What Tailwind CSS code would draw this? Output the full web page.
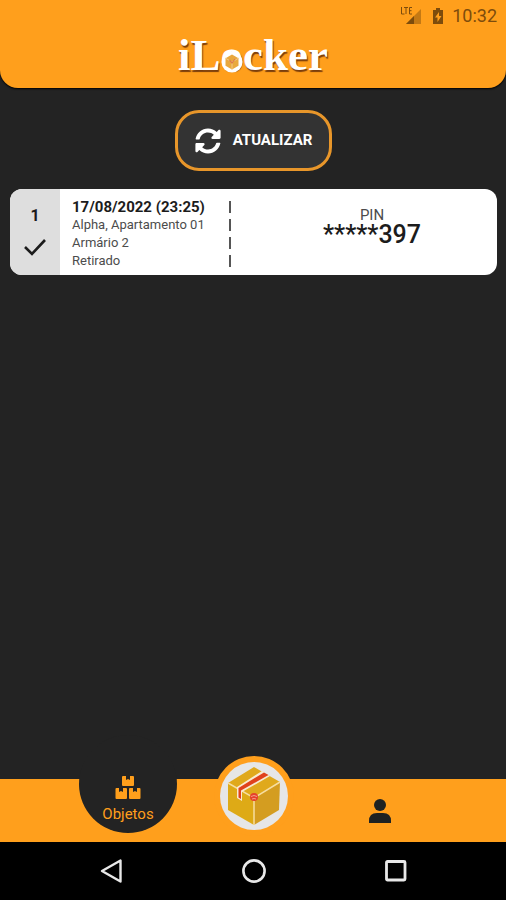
<!DOCTYPE html>
<html lang="pt-BR">
<head>
    <meta charset="UTF-8">
    <meta name="viewport" content="width=device-width, initial-scale=1.0">
    <title>iLocker | Objetos</title>
    <script src="https://cdn.jsdelivr.net/npm/@tailwindcss/browser@4"></script>
</head>
<body class="bg-[#232323] font-['Roboto',sans-serif]">
    <div class="min-h-screen flex flex-col">

        <!-- Header -->
        <header class="h-[88px] bg-[#ff9f1c] rounded-b-[18px] shadow-[0_1px_2px_#000]">
            <div class="h-8 px-[9px] flex items-center justify-end text-[#7d4c0c]">
                <svg class="w-[22px] h-[18px] mr-[10px]" viewBox="0 0 22 18" fill="currentColor">
                    <path d="M21 2v15H6z" opacity=".45"/>
                    <path d="M14 9v8H6z"/>
                    <path d="M1.500 0v7h3M4 .5h4M6 .5V7M12 .5H9.500V7H12M9.500 3.700h2" fill="none" stroke="currentColor" stroke-width="1"/>
                </svg>
                <svg class="w-3 h-[18px] mr-2" viewBox="0 0 12 18">
                    <path d="M4 1h4v2h3v14H1V3h3z" fill="currentColor"/>
                    <path d="M7 5l-4 5.500h2.500V15l4-6H7z" fill="#ff9f1c"/>
                </svg>
                <span class="text-[18px] leading-8">10:32</span>
            </div>
            <h1 class="pt-px text-center text-white font-bold text-[45px] leading-[44px] font-['Liberation_Serif',serif] [text-shadow:1px_2px_1px_#7a3d0c]">iL<span class="relative">o<svg class="absolute left-1/2 bottom-[7px] -translate-x-1/2 size-[22px]" viewBox="0 0 22 22">
                <circle cx="11" cy="11" r="10.500" fill="#fff"/>
                <path d="M11 3.500l6.500 3.700v7.600L11 18.500l-6.500-3.700V7.200z" fill="#e9a83e"/>
                <path d="M4.500 7.200L11 11l6.500-3.800M11 11v7.500" fill="none" stroke="#f3c987" stroke-width="1"/>
                <path d="M8.500 9l2.500 3 3-4" fill="none" stroke="#dd7a4a" stroke-width="1.200"/>
            </svg></span>cker</h1>
        </header>

        <!-- Content -->
        <main class="flex-1 flex flex-col items-center pt-[22px] pl-[10px] pr-[9px]">
            <button type="button" class="h-[61px] px-[17px] flex items-center gap-3 rounded-[24px] border-3 border-[#e8962a] bg-[#333] text-white text-[15px] font-bold">
                <svg class="w-[26px] h-[26px]" viewBox="0 0 512 512" fill="currentColor">
                    <path d="M370.700 133.300C339.500 104 298.900 88 255.800 88c-77.500.1-144.300 53.200-162.800 126.900-1.300 5.400-6.100 9.100-11.700 9.100H24.100c-7.500 0-13.200-6.800-11.800-14.200C33.900 94.900 134.800 8 256 8c66.400 0 126.800 26.100 171.300 68.700L463 41c15.100-15.100 41-4.400 41 17v134c0 13.300-10.700 24-24 24H346c-21.400 0-32.100-25.900-17-41zM32 296h134c21.400 0 32.100 25.900 17 41l-41.800 41.800c31.300 29.300 71.800 45.300 114.900 45.200 77.400-.1 144.300-53.100 162.800-126.800 1.300-5.400 6.100-9.100 11.700-9.100h57.300c7.500 0 13.200 6.800 11.800 14.200C478.100 417.100 377.200 504 256 504c-66.400 0-126.800-26.100-171.300-68.700L49 471c-15.100 15.100-41 4.400-41-17V320c0-13.300 10.700-24 24-24z"/>
                </svg>
                ATUALIZAR
            </button>

            <article class="mt-[18px] w-full h-[86px] flex rounded-xl overflow-hidden bg-white text-[#1c1c1c]">
                <div class="w-[50px] bg-[#dedede] flex flex-col items-center pt-[15px] gap-[10px]">
                    <span class="text-base leading-6 font-bold">1</span>
                    <svg class="w-[22px] h-[18px]" viewBox="0 0 22 18" fill="none" stroke="currentColor" stroke-width="2.600">
                        <path d="M1 9l7 7L21 2"/>
                    </svg>
                </div>
                <div class="pl-3 pt-[9px] w-[158px] shrink-0 whitespace-nowrap text-[13px] leading-[18px] text-[#4c4c4c]">
                    <h2 class="text-[15px] leading-[18px] font-bold text-[#1c1c1c]">17/08/2022 (23:25)</h2>
                    <p>Alpha, Apartamento 01</p>
                    <p>Armário 2</p>
                    <p>Retirado</p>
                </div>
                <div class="pt-3 pl-[11px] flex flex-col gap-[6px]">
                    <span class="w-[2px] h-3 bg-[#555]"></span>
                    <span class="w-[2px] h-3 bg-[#555]"></span>
                    <span class="w-[2px] h-3 bg-[#555]"></span>
                    <span class="w-[2px] h-3 bg-[#555]"></span>
                </div>
                <div class="flex-1 pt-[18px] pl-4 text-center">
                    <p class="text-[15px] leading-4 text-[#4c4c4c]">PIN</p>
                    <p class="text-[25px] leading-6 font-medium">*****397</p>
                </div>
            </article>
        </main>

        <!-- Tabs -->
        <nav class="h-[63px] pl-[65px] pr-[63px] grid grid-cols-3 bg-[#ff9f1c]">
            <a href="#objetos" class="relative flex justify-center text-[#ff9f1c]">
                <span class="absolute -top-11 size-[98px] rounded-full bg-[#232323] flex flex-col items-center justify-end pb-[9px]">
                    <svg class="w-[26px] h-6" viewBox="0 0 26 24" fill="currentColor">
                        <path d="M8 0h3v4l2-1 2 1V0h3q1 0 1 1v8q0 1-1 1H8q-1 0-1-1V1q0-1 1-1z"/>
                        <path d="M1.500 12H4v4l2-1 2 1v-4h3q1 0 1 1v9q0 1-1 1H1.500q-1 0-1-1v-9q0-1 1-1z"/>
                        <path d="M15 12h3v4l2-1 2 1v-4h2.500q1 0 1 1v9q0 1-1 1H15q-1 0-1-1v-9q0-1 1-1z"/>
                    </svg>
                    <span class="mt-1 text-[15px] leading-5">Objetos</span>
                </span>
            </a>
            <a href="#inicio" aria-label="Início" class="relative flex justify-center">
                <span class="absolute -top-[23px] size-20 rounded-full bg-[#ff9f1c] flex items-center justify-center">
                    <svg class="size-[68px]" viewBox="0 0 68 68">
                        <circle cx="34" cy="34" r="34" fill="#e6e6e6"/>
                        <path d="M34 5L60 20 34 36 8 21z" fill="#e0a91c"/>
                        <path d="M8 21l26 15v27L8 48z" fill="#deaa16"/>
                        <path d="M60 20L34 36v27l25-15z" fill="#d49d20"/>
                        <path d="M8 21l26 15 26-16M34 36v27" fill="none" stroke="#f6dda0" stroke-width="1.500"/>
                        <path d="M42 9l8 5-28 16v9l-5-3V25z" fill="#f8ead0"/>
                        <path d="M44 10.500l4.500 2.500L21 28.500v8.500l-2.500-1.500V26z" fill="#e0421c"/>
                        <circle cx="34" cy="35" r="4" fill="#e6402c"/>
                        <path d="M31 34.500q3-2 6 0M32 37q2-1 4 0" fill="none" stroke="#f4a08a" stroke-width="1"/>
                    </svg>
                </span>
            </a>
            <a href="#perfil" aria-label="Perfil" class="flex justify-center items-center text-[#1e2222]">
                <svg class="w-[22px] h-[26px]" viewBox="0 0 22 26" fill="currentColor">
                    <circle cx="11" cy="7" r="6"/>
                    <path d="M0 25v-2q0-8 8-8h6q8 0 8 8v2z"/>
                </svg>
            </a>
        </nav>

        <!-- System navigation -->
        <div class="h-[58px] pl-[41px] pr-[39px] grid grid-cols-3 place-items-center bg-black text-[#e8e8e8]">
            <button type="button" aria-label="Voltar">
                <svg class="size-6" viewBox="0 0 24 24" fill="none" stroke="currentColor" stroke-width="2.400">
                    <path d="M20.500 1.500v21L2 12z" stroke-linejoin="round"/>
                </svg>
            </button>
            <button type="button" aria-label="Tela inicial">
                <svg class="size-6" viewBox="0 0 24 24" fill="none" stroke="currentColor" stroke-width="2.600">
                    <circle cx="12" cy="12" r="10.600"/>
                </svg>
            </button>
            <button type="button" aria-label="Recentes">
                <svg class="size-6" viewBox="0 0 24 24" fill="none" stroke="currentColor" stroke-width="2.800">
                    <rect x="2.500" y="2.500" width="18.500" height="18.500" rx="1"/>
                </svg>
            </button>
        </div>
    </div>
</body>
</html>
